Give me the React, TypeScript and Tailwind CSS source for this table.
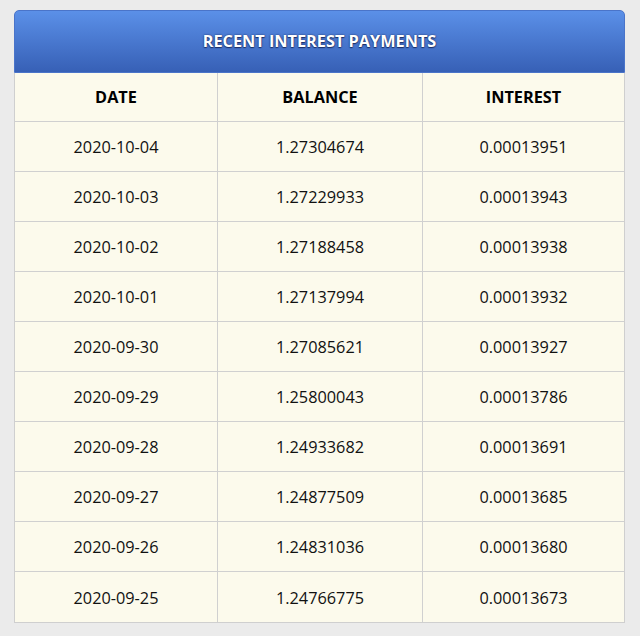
import React from "react";

const rows = [
  ["2020-10-04", "1.27304674", "0.00013951"],
  ["2020-10-03", "1.27229933", "0.00013943"],
  ["2020-10-02", "1.27188458", "0.00013938"],
  ["2020-10-01", "1.27137994", "0.00013932"],
  ["2020-09-30", "1.27085621", "0.00013927"],
  ["2020-09-29", "1.25800043", "0.00013786"],
  ["2020-09-28", "1.24933682", "0.00013691"],
  ["2020-09-27", "1.24877509", "0.00013685"],
  ["2020-09-26", "1.24831036", "0.00013680"],
  ["2020-09-25", "1.24766775", "0.00013673"],
];

export default function App() {
  return (
    <div className="w-[640px] h-[636px] bg-[#ebebeb] pt-[10px] pl-[14px] font-['Open_Sans',sans-serif]">
      <div className="w-[611px]">
        <div className="h-[63px] rounded-t-[5px] bg-gradient-to-b from-[#5b90e8] to-[#3760b6] border border-[#4a74c9] flex items-center justify-center">
          <span className="text-white font-bold text-[16.3px] [text-shadow:0_0_2px_#1c2f66,0_1px_1px_#1c2f66]">
            RECENT INTEREST PAYMENTS
          </span>
        </div>
        <div className="bg-[#fcfaec] border-l border-r border-b border-[#cfcfcf]">
          <div className="grid grid-cols-[203px_205px_1fr] h-[49px] border-b border-[#d0d0d0]">
            <div className="flex items-center justify-center font-bold text-[16.3px] text-black border-r border-[#d0d0d0]">DATE</div>
            <div className="flex items-center justify-center font-bold text-[16.3px] text-black border-r border-[#d0d0d0]">BALANCE</div>
            <div className="flex items-center justify-center font-bold text-[16.3px] text-black">INTEREST</div>
          </div>
          {rows.map((r, i) => (
            <div
              key={i}
              className={`grid grid-cols-[203px_205px_1fr] h-[50px] ${i < rows.length - 1 ? "border-b border-[#d0d0d0]" : ""}`}
            >
              <div className="flex items-center justify-center pt-[2px] text-[16.3px] text-[#111111] border-r border-[#d0d0d0]">{r[0]}</div>
              <div className="flex items-center justify-center pt-[2px] text-[16.3px] text-[#111111] border-r border-[#d0d0d0]">{r[1]}</div>
              <div className="flex items-center justify-center pt-[2px] text-[16.3px] text-[#111111]">{r[2]}</div>
            </div>
          ))}
        </div>
      </div>
    </div>
  );
}
